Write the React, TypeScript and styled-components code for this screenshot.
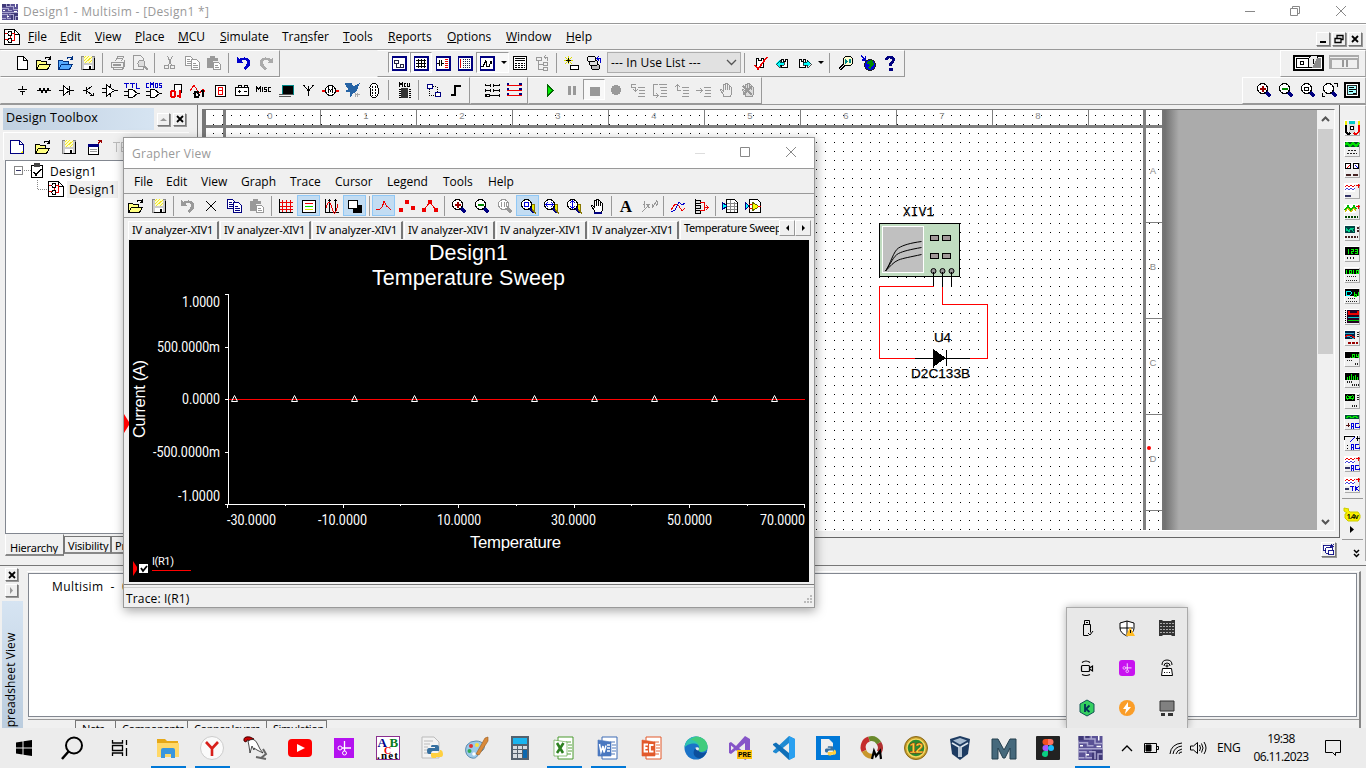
import React from 'react';
import styled, { createGlobalStyle, css } from 'styled-components';

const UI = `'Open Sans', 'Noto Sans', sans-serif`;
const TAB = `'Noto Sans', sans-serif`;

const Global = createGlobalStyle`
  * { box-sizing: border-box; }
  html, body { margin: 0; padding: 0; overflow: hidden; }
  body { font: 12px/16px ${UI}; color: #000; background: #f0f0f0; }
`;

/* ---------- icon drawings, 16 x 16 units ---------- */

const L = ({ d, c = '#000', w = 1, f = 'none' }: { d: string; c?: string; w?: number; f?: string }) => (
  <path d={d} stroke={c} strokeWidth={w} fill={f} />
);
const F = ({ d, c = '#000' }: { d: string; c?: string }) => <path d={d} fill={c} />;

const lens = (inner: React.ReactNode, rim = '#000', grip = '#000080') => (
  <>
    <circle cx="6.5" cy="6.5" r="5" fill="#fff" stroke={rim} />
    <L d="M10.5 10.5l4 4" c={grip} w={3} />
    {inner}
  </>
);
const hand = (c: string, f: string) => (
  <L d="M5.5 14.5v-2l-3-4c0-2 2-1 3 1v-6c0-2 2-2 2 0v-1c0-2 2-2 2 0v1c0-1 2-1 2 0v2c0-1 2-1 2 0v6l-1 3z M7.500 4v4 M9.500 4v4 M11.500 5v3" c={c} f={f} />
);
const openFolder = (f: string, c: string) => (
  <>
    <L d="M.5 14.500v-9h4l1 1h5v3M.5 14.500l3-5h11l-3 5z" c={c} f={f} />
    <L d="M9 3.500q2-3 5 0M14.500 1v3.500h-3" c={c} />
  </>
);
const disk = (
  <>
    <rect x="1.500" y="1.500" width="13" height="13" fill="#ccc" stroke="#888" />
    <rect x="4" y="1" width="8" height="7" fill="#ffffc8" />
    <L d="M4 3l2-2M4 6l5-5M5 8l7-6M9 8l3-3" c="#f0e428" />
    <rect x="4" y="10" width="8" height="5" fill="#fff" />
    <F d="M9 11h2v4H9zM14 3h1v12H3v-1h11z" />
  </>
);
const page = <L d="M3.500 1.500h6l4 4v9h-10zM9.500 1.500v4h4" f="#fff" />;
const undo = (c: string) => <path d="M1 2v6h6L5 6q5-3 6 1 0 3-4 6l2 2q7-5 5-9Q11 0 3 4z" fill={c} />;
const copy = (c: string) => (
  <>
    <L d="M1.500 1.500h5l2 2v7h-7zM3 4.500h3M3 6.500h4M3 8.500h4" c={c} f="#fff" />
    <L d="M7.500 4.500h5l3 3v7h-8zM9 8.500h3M9 10.500h5M9 12.500h5" c={c} f="#fff" />
  </>
);
const paste = (
  <>
    <F d="M1 3h3V1h5v2h3v3H7v7H1z" c="#999" />
    <L d="M7.500 7.500h5l2 2v5h-7zM9 10.500h3M9 12.500h4" c="#999" f="#fff" />
  </>
);
const windowFrame = (inner: React.ReactNode) => (
  <>
    <rect x="1.500" y="1.500" width="13" height="13" fill="#fff" stroke="#000080" strokeWidth="1" />
    <F d="M1 1h14v2H1zM14 1h1.500v14.500H1V14h13z" c="#000080" />
    {inner}
  </>
);
const designDoc = (
  <>
    <L d="M.5.500h10l5 5v10H.5z" f="#fff" />
    <L d="M10.500.500v5h5" />
    <L d="M1 4.500h3M1 10.500h3M8 4.500h2.500v7H8M6.500 6v4" c="#e00" />
    <circle cx="6" cy="4.500" r="2" fill="#fff" stroke="#000" />
    <circle cx="6" cy="11.500" r="2" fill="#fff" stroke="#000" />
  </>
);
const stepLines = <L d="M8 5.500h7M9 8.500h6M9 11.500h6M8 14.500h7" c="#999" />;
const gate = <L d="M0 9.500h4M0 13.500h4M4.500 7.500h4l5 4-5 4h-4zM13 11.500h3" f="#fff" />;

const ICONS: Record<string, React.ReactNode> = {
  app: (
    <>
      <rect width="16" height="16" fill="#5a5296" />
      <F d="M0 0h7v3H0zM9 9h7v7H9z" c="#403a78" />
      <L d="M0 4.500h6v2h4M4 0v2h7v3h5M0 8.500h16M0 10.500h5v4h4M7 10.500h4v5M13 16v-4h3M0 14.500h4M8.500 0v2" c="#a9a5cf" />
      <L d="M13.500 0v3M1 6.500h2M5 12.500h2M12 7h3" c="#fff" />
    </>
  ),
  design: designDoc,
  new: page,
  open: openFolder('#ffff80', '#000'),
  openSample: openFolder('#55aaff', '#003080'),
  save: disk,
  print: (
    <>
      <L d="M5.500 6.500l2-5h6l-2 5M1.500 7.500h12v5h-12zM3.500 12.500v2h9l2-4M14.500 5v6M7 3.500h5" c="#999" f="#f0f0f0" />
      <F d="M3 9h8v2H3z" c="#999" />
    </>
  ),
  preview: (
    <>
      <L d="M1.500.500h7l3 3v11h-10z" c="#999" />
      <circle cx="9.500" cy="8.500" r="3.500" fill="#ddd" stroke="#999" />
      <L d="M12 11l4 4" c="#999" w={2} />
    </>
  ),
  cut: (
    <>
      <L d="M5.500 1l4 9M10.500 1l-4 9" c="#999" />
      <circle cx="4.500" cy="12" r="2" fill="none" stroke="#999" />
      <circle cx="10.500" cy="12" r="2" fill="none" stroke="#999" />
    </>
  ),
  copyGray: copy('#999'),
  copy: copy('#000080'),
  paste,
  undo: undo('#00c'),
  undoGray: undo('#999'),
  redoGray: <g transform="matrix(-1 0 0 1 16 0)">{undo('#aaa')}</g>,
  viewTool: windowFrame(<L d="M3.500 5.500h4v3h-4zM5.500 8v4h4M9.500 9.500h3v3h-3z" c="#224" />),
  viewGrid: windowFrame(<L d="M5.500 4v9M8.500 4v9M11.500 4v9M3 5.500h10M3 8.500h10M3 11.500h10" />),
  viewPart: windowFrame(
    <>
      <L d="M2 8.500h2M4.500 5v6M6.500 5v6M7 8.500h2" />
      <L d="M10 4.500h3M10 6.500h3M10 8.500h3M10 10.500h3M10 12.500h3" c="#e00" />
    </>,
  ),
  viewSheet: windowFrame(
    <>
      <L d="M3.500 4v9" c="#e00" />
      <path d="M6.500 4v9M8.500 4v9M10.500 4v9M12.500 4v9" stroke="#224" strokeDasharray="1 1" />
    </>,
  ),
  viewGraph: windowFrame(<L d="M2 11.500h2l3-6 1 6h2l2-5 1 2" />),
  calc: (
    <>
      <rect x="1.500" y="1.500" width="13" height="13" fill="#fff" stroke="#000" />
      <L d="M3 3.500h10M3 5.500h10" />
      <path d="M3 8.500h10M3 10.500h10M3 12.500h10" stroke="#000" strokeDasharray="2 1" />
    </>
  ),
  tree: <L d="M2 2.500h5v3H2zM4.500 6v8h5M5 9.500h4M9.500 7.500h4v3h-4zM9.500 12.500h4v3h-4zM13.500 6v-4h-3M12 0l-2 2 2 2" c="#999" />,
  newPart: (
    <>
      <L d="M4.500 1v8M0 5.500h9M1 2l7 7M8 2L1 9" c="#dd0" />
      <rect x="6.500" y="10.500" width="8" height="4" fill="#fff" stroke="#000" />
      <L d="M4.500 3v5M2 5.500h5" />
    </>
  ),
  database: (
    <>
      <rect x="5.500" y="9.500" width="8" height="5" rx="2" fill="#bbb" stroke="#000" />
      <rect x="3.500" y="5.500" width="8" height="5" rx="2" fill="#ddd" stroke="#000" />
      <rect x="1.500" y="1.500" width="8" height="5" rx="2" fill="#eee" stroke="#000" />
      <L d="M14.500 8V3.500h-3M13 1l-2 2.500 2 2" c="#00c" />
    </>
  ),
  erc: (
    <>
      <L d="M3.500 12V3h2v2h3V3h2v9z" f="#fff" />
      <L d="M2 10l3 4 9-12" c="#e00" w={1.600} />
    </>
  ),
  annotBack: (
    <>
      <L d="M6.500 12.500v-8h2v2h2v-2h2v8z" f="#fff" />
      <path d="M1 8.500l4-4v2.500h4v3H5v2.500z" fill="#0ff" stroke="#000" strokeWidth=".7" />
    </>
  ),
  annotFwd: (
    <>
      <L d="M2.500 12.500v-8h2v2h2v-2h2v8z" f="#fff" />
      <path d="M14 8.500l-4-4v2.500H6v3h4v2.500z" fill="#0ff" stroke="#000" strokeWidth=".7" />
    </>
  ),
  find: (
    <>
      <circle cx="10" cy="6" r="5" fill="#ffffd0" stroke="#000" />
      <L d="M6.500 9.500l-5 5" w={3} />
      <L d="M6.500 9.500l-5 5" c="#eee" />
      <F d="M7 4l3 2-3 3zM11 4h2v4h-2z" c="#088" />
    </>
  ),
  web: (
    <>
      <circle cx="10" cy="10" r="5.500" fill="#0000e0" stroke="#222" />
      <F d="M8 6l4-1 2 4-3 4-1 2-2-3 2-2-3-1z" c="#080" />
      <L d="M1 1l4 3M5.500.500v4.500H2" c="#00c" w={1.600} />
    </>
  ),
  help: (
    <path d="M3 5q0-4 5-4t5 4q0 2-3 4v2H7V8q3-2 3-3T8 3.500 6 5zM6.500 12.500h4v3h-4z" fill="#000080" />
  ),

  source: <L d="M8.500 4v3M4 7.500h9M6 9.500h5M8.500 10v3" />,
  resistor: <L d="M1 8.500h2l1-2 2 4 2-4 2 4 2-4 1 2h2" />,
  diode: <L d="M1 8.500h4M12 8.500h4M5.500 4v9l6-4.500zM11.500 4v9" f="#fff" />,
  transistor: <L d="M3 8.500h3M6.500 5v7M7 8l5-4M7 9l5 4M10 13.500h3v-3" />,
  opamp: <L d="M0 6.500h4M0 10.500h4M4.500 3v11l8-5.500zM12 8.500h4M8.500 2v3M8.500 12v3" f="#fff" />,
  ttl: (
    <>
      {gate}
      <L d="M0 1.500h5M2.500 1v5M6 1.500h5M8.500 1v5M12.500 1v5h3" c="#00c" />
    </>
  ),
  cmos: (
    <>
      {gate}
      <L d="M3 1.500H.5v4H3M4.500 6V1l1.500 2 1.500-2v5M9 1.500h2v4H9zM15.500 1.500H13v2h2.500v2H13" c="#00c" />
    </>
  ),
  misdigital: (
    <>
      <L d="M6.500 8V2.500h7v8M6 2.500h2" f="#fff" />
      <rect x="3" y="9" width="4" height="6" rx="1.500" fill="none" stroke="#e00" strokeWidth="2" />
      <L d="M12 8v8" c="#e00" w={2.400} />
      <L d="M9 14h1.500" c="#e00" w={2} />
    </>
  ),
  mixed: (
    <>
      <L d="M0 9l4-6 3 5 3 3 3-4 2 3" c="#e00" />
      <rect x="4.500" y="10" width="4" height="5" rx="1.500" fill="none" stroke="#000" strokeWidth="2" />
      <L d="M13 8v7M11 9.500l2-1" w={2} />
    </>
  ),
  indicator: (
    <>
      <rect x="3.500" y="3.500" width="10" height="11" fill="#fff" stroke="#000" />
      <L d="M6.500 5.500h4v3h-4zM6.500 8.500h4v4h-4z" c="#e00" />
    </>
  ),
  power: <L d="M1.500 5.500h13v8h-13zM4 5V3h3v2M10 5V3h3v2M4 9.500h3M9.500 9.500h3M5.500 8v3" f="#fff" />,
  misc: <L d="M.5 10V5l2 2 2-2v5M6.500 5v5M10.500 5.500H8.500v2h2v2h-2.500M14.500 5.500h-2v4h2" />,
  periph: (
    <>
      <rect x="4" y="3" width="11" height="9" fill="#000" stroke="#088" />
      <L d="M1 12.500h14M1 14.500h12" c="#555" />
    </>
  ),
  rf: <L d="M8.500 14V9l-5-6M8.500 9l5-6M8.500 4v6" />,
  motor: (
    <>
      <L d="M0 8.500h3M14 8.500h3" c="#e00" w={2} />
      <circle cx="8.500" cy="8.500" r="5" fill="#fff" stroke="#000" />
      <L d="M6.500 11V6l2 3 2-3v5" />
    </>
  ),
  ni: (
    <>
      <path d="M1 1h6l2 4 6-3-3 7-3 2-3 4 1-5-5-1 3-1z" fill="#2563a5" stroke="#2563a5" />
      <L d="M11 11v4M13 11v4M12 12.500h4" c="#aaa" />
    </>
  ),
  socket: (
    <>
      <rect x="4" y="1.500" width="8" height="14" rx="4" fill="#fff" stroke="#000" />
      <path d="M6.500 4v10M9.500 4v10" stroke="#000" strokeDasharray="2 1" />
    </>
  ),
  mcu: (
    <>
      <L d="M3.500 4.500V1l1.500 2 1.500-2v3.500M10 1.500H8v3h2M11.500 1v3.500h2V1" />
      <F d="M5 6h7v10H5z" c="#333" />
      <path d="M3.500 7v9M13.500 7v9" stroke="#000" strokeWidth="2" strokeDasharray="1 1" />
    </>
  ),
  hier: (
    <>
      <rect x="1.500" y="2.500" width="5" height="4" fill="#fff" stroke="#000080" />
      <rect x="9.500" y="10.500" width="5" height="4" fill="#fff" stroke="#000080" />
      <path d="M3.500 7v6.500h6M7 4.500h4v6" stroke="#000" fill="none" strokeDasharray="1 1" />
    </>
  ),
  bus: <L d="M3 13h4V4h6" w={2} />,
  ladder1: (
    <>
      <L d="M1.500 2v2M15.500 2v2M1.500 7v3M15.500 7v3M1.500 12v3M15.500 12v3M1 3.500h5M10 3.500h6M1 8.500h5M10 8.500h6M1 13.500h15M6.500 2v3M9.500 2v3M6.500 7v3M9.500 7v3" />
      <circle cx="4" cy="13.500" r="1.500" fill="#fff" stroke="#000" />
    </>
  ),
  ladder2: (
    <>
      <L d="M1 3.500h15M1 8.500h15M1 13.500h15" c="#e00" />
      <L d="M1 2h2M13 2h3M1 7h2M13 7h3M1 12h2M13 12h3" c="#000080" w={1.500} />
    </>
  ),
  run: <path d="M5 2.500v12l6-6z" fill="#0e0" stroke="#060" />,
  pause: <F d="M4 4h3v9H4zM9 4h3v9H9z" c="#999" />,
  stop: <F d="M4 5h10v9H4z" c="#999" />,
  record: <circle cx="8" cy="8" r="5" fill="#999" />,
  step1: (
    <>
      {stepLines}
      <L d="M6 2.500H1.500v3h4v3M3 7l2.500 2L8 7" c="#999" />
    </>
  ),
  step2: (
    <>
      {stepLines}
      <L d="M6 2.500H1.500v11h4M4 11l2 2.500L4 16M7 2.500h8" c="#999" />
    </>
  ),
  step3: (
    <>
      {stepLines}
      <L d="M7 8.500H3.500V3M1 5l2.500-2L6 5" c="#999" />
    </>
  ),
  step4: (
    <>
      {stepLines}
      <L d="M0 8.500h6M4 6l2.500 2.500L4 11" c="#999" />
    </>
  ),
  handGray: hand('#999', '#eee'),
  handX: (
    <>
      {hand('#999', '#ddd')}
      <L d="M3 4l9 9M12 4l-9 9" c="#999" w={1.500} />
    </>
  ),
  hand: (
    <>
      {hand('#000', '#fff')}
      <F d="M5 14h8v2H5z" c="#000080" />
    </>
  ),
  zoomIn: lens(<L d="M3.500 6.500h6M6.500 3.500v6" c="#900" w={2} />),
  zoomOut: lens(<L d="M3.500 6.500h6" c="#080" w={2} />),
  zoomArea: lens(<L d="M4.500 5h4v3.500h-4z" />),
  zoomFit: (
    <>
      {lens(null)}
      <L d="M12 1.500h3.500V5M0 11v3.500h3" />
    </>
  ),
  zoomSheet: (
    <>
      <rect x="1" y="1" width="14" height="14" fill="#fff" stroke="#000" strokeWidth="1.500" />
      <rect x="3.500" y="3.500" width="9" height="9" fill="#a8ffff" stroke="#222" />
      <L d="M5 5.500h5M5 7.500h7M5 9.500h4M9 11.500h3" />
    </>
  ),
  zoomOneGray: lens(<L d="M4.500 4v5M7.500 4v5M9.500 4v5" c="#999" />, '#999', '#999'),
  zoomBox: (
    <>
      {lens(<L d="M4.500 4.500h4v4h-4z" c="#00d" w={1.400} />)}
      <L d="M12 6.500h2v4l1 4-3-3" c="#870" f="#ee0" />
    </>
  ),
  zoomHor: (
    <>
      {lens(<L d="M2.500 6.500h8M5 4L2.500 6.500 5 9M8 4l2.500 2.500L8 9" c="#00d" />)}
      <L d="M12 6.500h2v4l1 4-3-3" c="#870" f="#ee0" />
    </>
  ),
  zoomVer: (
    <>
      {lens(<L d="M6.500 2.500v8M4 5l2.500-2.500L9 5M4 8l2.500 2.500L9 8" c="#00d" />)}
      <L d="M12 6.500h2v4l1 4-3-3" c="#870" f="#ee0" />
    </>
  ),
  newNote: (
    <>
      <path d="M1.500 1.500h9l4 4v9h-13z" fill="#fff" stroke="#000080" />
      <L d="M10.500 1.500v4h4" c="#000080" />
      <F d="M11 14l3-3v3z" c="#ee0" />
    </>
  ),
  winArrow: (
    <>
      <rect x="1.500" y="5.500" width="10" height="10" fill="#fff" stroke="#000" />
      <F d="M1 5h11v3H1z" c="#000080" />
      <L d="M3 10.500h7M3 12.500h7" c="#999" />
      <L d="M11 4.500l3-3M11 1.500h3.500V4" c="#900" />
    </>
  ),
  rename: <L d="M0 3.500h7M3.500 4v9M12 3.500H8v9h4M8 8.500h3" c="#bbb" />,
  cross: <L d="M3 3l10 10M13 3L3 13" w={1.300} />,
  gridRed: (
    <>
      <L d="M4.500 2v12M8.500 2v12M12.500 2v12M2 4.500h13M2 8.500h13M2 11.500h13" c="#e00" />
      <L d="M1.500 1v13.500H15" />
    </>
  ),
  legend: (
    <>
      <rect x="1.500" y="2.500" width="13" height="12" fill="#fff" stroke="#000" />
      <L d="M4 5.500h8" c="#e00" />
      <L d="M4 8.500h8" c="#0d0" />
      <L d="M4 11.500h8" c="#dd0" />
    </>
  ),
  cursors: (
    <>
      <L d="M1.500 1v13.500H15M5.500 1v14M11.500 1v14M4 2h3M10 2h3" />
      <L d="M2 10q3-12 6 0t6-4" c="#e00" />
    </>
  ),
  invert: (
    <>
      <rect x="1.500" y="2.500" width="9" height="8" fill="#fff" stroke="#000" />
      <F d="M6 7h9v8H6z" />
      <F d="M6 7h4v3H6z" c="#fff" />
    </>
  ),
  trace: <L d="M0 11.500h3l3-2 2-6 3 5 4 3" c="#e00" />,
  dots: <F d="M0 10h4v4H0zM6 2h4v4H6zM12 8h4v4h-4z" c="#e00" />,
  traceDots: (
    <>
      <L d="M2 12l6-8 6 8" c="#e00" />
      <F d="M0 10h4v4H0zM6 2h4v4H6zM12 10h4v4h-4z" c="#e00" />
    </>
  ),
  letterA: (
    <text x="8" y="14" fontFamily="Liberation Serif, serif" fontWeight="700" fontSize="17" textAnchor="middle">
      A
    </text>
  ),
  xy: <L d="M1 14l4-4M5.500 6l3 4M8.500 6l-3 4M11 6l2 3M15 4l-4 6M4 3.500q-2 3 0 6M15.500 2q2 3 0 6" c="#999" />,
  overlay: (
    <>
      <L d="M1 12l4-6 4 2 3 5 3-3" c="#e00" />
      <L d="M1 14l4-2 4-8 3 3 3-2" c="#00c" />
    </>
  ),
  addTrace: (
    <>
      <L d="M2.500 1v14M2 2.500h5v3H2M2 7.500h5v3H2M2 12.500h5v3H2" f="#ddd" />
      <L d="M7 4.500h4v8H7M11 9.500h4M13 7l2.500 2.500L13 12" c="#e00" />
    </>
  ),
  toExcel: (
    <>
      <L d="M4.500 1.500h8l3 3v10h-11z" f="#fff" />
      <L d="M5 5.500h10M5 8.500h10M5 11.500h10M8.500 2v12M12.500 4v10" c="#888" />
      <path d="M0 4l5 4-5 4z" fill="#0ff" stroke="#000080" />
    </>
  ),
  toLab: (
    <>
      <L d="M4.500 1.500h8l3 3v10h-11z" f="#fff" />
      <path d="M7 4l7 4.500-7 4.500z" fill="#ff0" stroke="#660" />
      <L d="M4 6.500h3M4 10.500h3M13 8.500h3" c="#e00" />
      <path d="M0 4l4 4-4 4z" fill="#0ff" stroke="#000080" />
    </>
  ),
  windows: (
    <>
      <L d="M1.500 2.500h8v6h-8z" c="#000080" f="#fff" />
      <L d="M4.500 5.500h8v6h-8z" c="#000080" f="#fff" />
      <L d="M7.500 8.500h6v5h-6zM10 4l4-3M11 1v3h3" c="#000080" f="#fff" />
    </>
  ),
  clip: (
    <>
      <rect x=".5" y="2.500" width="11" height="12" fill="#fff" stroke="#000" strokeWidth="1.500" />
      <F d="M3 0h6v4H3z" c="#444" />
      <L d="M3 9l2 3 5-6" w={1.600} />
    </>
  ),
};

const Svg16 = styled.svg`
  display: block;
  flex: none;
  overflow: visible;
`;
const Icon = ({ name, size = 16 }: { name: string; size?: number }) => (
  <Svg16 width={size} height={size} viewBox="0 0 16 16" shapeRendering="crispEdges">
    {ICONS[name]}
  </Svg16>
);

/* ---------- main window chrome ---------- */

const Desktop = styled.div`
  position: relative;
  width: 1366px;
  height: 768px;
  overflow: hidden;
  display: flex;
  flex-direction: column;
  background: #f0f0f0;
`;
const TitleBar = styled.div`
  height: 24px;
  flex: none;
  display: flex;
  align-items: center;
  gap: 5px;
  padding-left: 2px;
  background: #fff;
  border-bottom: 1px solid #999;
  color: #999;
`;
const TitleText = styled.div`
  flex: 1;
  padding-top: 1px;
  letter-spacing: 0.320px;
`;
const Caption = styled.svg`
  width: 46px;
  height: 20px;
  flex: none;
`;
const MenuBar = styled.div`
  height: 26px;
  flex: none;
  display: flex;
  align-items: center;
  padding: 0 4px 0 4px;
  border-top: 1px solid #fff;
  border-bottom: 1px solid #999;
`;
const MenuItem = styled.div<{ $w: number }>`
  width: ${(p) => p.$w}px;
  flex: none;
  white-space: nowrap;
`;
const MdiButtons = styled.div`
  margin-left: auto;
  display: flex;
  gap: 2px;
  padding-top: 4px;
`;
const raised = css`
  background: #f0f0f0;
  border: 1px solid #fff;
  border-right-color: #777;
  border-bottom-color: #777;
  box-shadow: 1px 1px 0 #999;
`;
const SmallButton = styled.div<{ $s: number }>`
  ${raised}
  width: ${(p) => p.$s}px;
  height: ${(p) => p.$s}px;
  flex: none;
  display: flex;
  align-items: center;
  justify-content: center;
`;
const BarRow = styled.div`
  height: 27px;
  flex: none;
  display: flex;
`;
const Bar = styled.div<{ $w: number; $pad?: number; $end?: boolean }>`
  width: ${(p) => p.$w}px;
  height: 27px;
  flex: none;
  display: flex;
  align-items: center;
  padding-bottom: 2px;
  padding-left: ${(p) => p.$pad ?? 11}px;
  margin-left: ${(p) => (p.$end ? 'auto' : '0')};
  border-top: 1px solid #fff;
  border-left: 1px solid ${(p) => (p.$end ? '#fff' : 'transparent')};
  border-right: 1px solid ${(p) => (p.$end ? '#aaa' : '#999')};
  border-bottom: 1px solid #999;
`;
const Cell = styled.div<{ $w?: number; $on?: boolean }>`
  width: ${(p) => p.$w ?? 22}px;
  height: 21px;
  flex: none;
  display: flex;
  align-items: center;
  justify-content: center;
  gap: 6px;
  ${(p) =>
    p.$on &&
    css`
      background: #f8f8f8;
      border: 1px solid #999;
      border-right-color: #fff;
      border-bottom-color: #fff;
    `}
`;
const Sep = styled.div<{ $w?: number }>`
  width: ${(p) => p.$w ?? 8}px;
  height: 20px;
  flex: none;
  &::before {
    content: '';
    display: block;
    width: 1px;
    height: 100%;
    margin-left: 3px;
    background: #999;
  }
`;
const Arrow = styled.div`
  border: 3px solid transparent;
  border-top-color: #000;
  border-bottom: 0;
`;
const Select = styled.div`
  width: 134px;
  height: 21px;
  margin: 0 0 0 1px;
  display: flex;
  align-items: center;
  justify-content: space-between;
  padding: 0 3px;
  background: #e1e1e1;
  border: 1px solid #adadad;
  letter-spacing: 0.150px;
`;
const Gap = styled.div<{ $w: number }>`
  width: ${(p) => p.$w}px;
  flex: none;
`;
const Icons = ({ names }: { names: string[] }) => (
  <>
    {names.map((n) => (
      <Cell key={n}>
        <Icon name={n} />
      </Cell>
    ))}
  </>
);

/* ---------- work area ---------- */

const Work = styled.div`
  height: 457px;
  flex: none;
  display: flex;
  border-top: 1px solid #999;
`;
const Toolbox = styled.div`
  width: 197px;
  flex: none;
  display: flex;
  flex-direction: column;
  padding: 3px 8px 0 3px;
`;
const ToolboxHead = styled.div`
  height: 22px;
  flex: none;
  display: flex;
  align-items: center;
  gap: 3px;
`;
const ToolboxTitle = styled.div`
  width: 151px;
  height: 22px;
  padding: 2px 3px;
  font-size: 12.500px;
  letter-spacing: 0.170px;
  background: linear-gradient(90deg, #c0d0e0, #d6e4f2);
`;
const ToolboxBar = styled.div`
  height: 28px;
  margin-top: 2px;
  flex: none;
  display: flex;
  align-items: center;
  gap: 10px;
  padding-left: 5px;
  border-top: 1px solid #fff;
  border-left: 1px solid #fff;
`;
const Tree = styled.div`
  height: 374px;
  flex: none;
  margin-left: 2px;
  padding-top: 1px;
  background: #fff;
  border: 1px solid #828790;
`;
const TreeRow = styled.div<{ $indent: number }>`
  height: 18px;
  display: flex;
  align-items: center;
  padding-left: ${(p) => p.$indent}px;
  line-height: 17px;
`;
const TreeLabel = styled.div<{ $sel?: boolean }>`
  margin-left: ${(p) => (p.$sel ? 3 : 1)}px;
  padding: 0 2px;
  letter-spacing: 0.300px;
  background: ${(p) => (p.$sel ? '#f0f0f0' : 'none')};
`;
const BottomTabs = styled.div`
  display: flex;
  align-items: flex-start;
  margin-left: 2px;
  font: 11px/15px ${TAB};
  letter-spacing: -0.200px;
  white-space: nowrap;
`;
const BottomTab = styled.div<{ $w: number; $on?: boolean }>`
  width: ${(p) => p.$w}px;
  height: ${(p) => (p.$on ? 22 : 18)}px;
  margin-top: ${(p) => (p.$on ? 0 : 2)}px;
  padding: ${(p) => (p.$on ? '5px 0 0 4px' : '1px 0 0 3px')};
  overflow: hidden;
  border: 1px solid #777;
  border-top-color: ${(p) => (p.$on ? 'transparent' : '#777')};
  border-left-color: ${(p) => (p.$on ? '#fff' : '#777')};
  border-bottom: 2px solid #888;
`;
const CanvasColumn = styled.div`
  width: 1143px;
  flex: none;
`;
const CanvasFrame = styled.div`
  height: 433px;
  padding: 4px 5px 0 4px;
  border-left: 1px solid #777;
  border-right: 1px solid #666;
  border-bottom: 1px solid #666;
`;
const CanvasInner = styled.div`
  display: flex;
  width: 1133px;
  height: 422px;
  border: 1px solid #777;
  border-left-width: 4px;
  border-right: 1px solid #fff;
  border-bottom: 1px solid #fff;
`;
const Backdrop = styled.div`
  width: 155px;
  background: linear-gradient(90deg, #757575 0, #727272 3px, #ababab 17px);
`;
const ScrollBar = styled.div`
  width: 17px;
  display: flex;
  flex-direction: column;
  align-items: center;
  background: #f0f0f0;
`;
const ScrollThumb = styled.div`
  width: 15px;
  height: 225px;
  margin-bottom: auto;
  background: #cdcdcd;
`;
const Dock = styled.div`
  height: 23px;
  display: flex;
  align-items: center;
  justify-content: flex-end;
  padding-right: 4px;
`;
const Strip = styled.div`
  width: 26px;
  display: flex;
  flex-direction: column;
  align-items: center;
  padding: 14px 1px 0 0;
  border-right: 1px solid #aaa;
  border-top: 1px solid #fff;
`;
const Instrument = styled.svg`
  width: 16px;
  height: 16px;
  margin-bottom: 5px;
  flex: none;
  overflow: visible;
`;
const StripLine = styled.div`
  width: 21px;
  height: 1px;
  flex: none;
  background: #999;
`;

const agMark = <L d="M7.500 14.500V9.500h2v5M8 12.500h2M15 9.500h-3.500v4H15v-2" c="#00d" />;
const scopeWave = (
  <>
    <rect x="1" y="1" width="10" height="8" fill="#fff" />
    <L d="M1 4l2-2 2 2 2-2 2 2 2-2" c="#e00" />
    <L d="M1 7l2-2 2 2 2-2 2 2 2-2" c="#44d" />
    <L d="M12 2.500h4M14 .500v4" c="#e00" />
  </>
);

const instrumentFaces: React.ReactNode[] = [
  <>
    <F d="M5 1h6v12H5z" c="#ddd" />
    <F d="M5 1h6v3H5z" c="#0cc" />
    <circle cx="8" cy="8" r="2" fill="#fff" stroke="#000" />
    <L d="M1.500 1v4M14.500 1v4" c="#ee0" w={2} />
    <L d="M1.500 5v7q2 3 5 1" w={2} />
    <L d="M14.500 5v7q-2 3-5 1" c="#e00" w={2} />
  </>,
  <><F d="M1 1h14v5H1z" c="#052" /><L d="M1 4l2-2 3 3 3-3 3 3 3-3" c="#0d0" w={1.500} /><path d="M4 9.500h8M3 12.500h10" stroke="#222" strokeDasharray="2 1" /></>,
  <><L d="M1.500 1.500h5v5h-5zM9.500 1.500h5v5h-5z" f="#fff" /><L d="M3 6l3-3" c="#e00" /><L d="M11 3l3 3" c="#00d" /><L d="M2 12.500h5M9 12.500h5" w={2} c="#422" /></>,
  <>{scopeWave}<L d="M1 12.500h6" c="#336" w={2} /></>,
  <><rect x="1" y="1" width="11" height="8" fill="#fff" /><L d="M1 6l3-4 3 4 3-4 2 3" c="#0b0" w={1.500} /><L d="M1 8l3-4 3 4 3-4 2 3" c="#cb0" /><L d="M12 2.500h4M14.500 1v4" c="#e00" /><path d="M1 12.500h13" stroke="#040" strokeWidth="2" strokeDasharray="2 1" /></>,
  <><F d="M1 1h10v7H1z" c="#044" /><L d="M2 3l3 4 2-4 3 4M2 6l8-3" c="#0c8" /><path d="M14 2v6M1 12h13" stroke="#422" strokeWidth="2" strokeDasharray="2 1" /></>,
  <><F d="M1 1h14v8H1z" /><L d="M4.500 3v5M7 3.500h2v2H7v2h2M11 3.500h2v4h-2M11 5.500h2" c="#0e0" /><path d="M3 12h9" stroke="#222" strokeDasharray="1 2" strokeWidth="2" /></>,
  <><F d="M1 2h14v5H1z" /><L d="M2.500 3v4M5 3.500h2v3H5zM9.500 3v4M12 3.500h2v3h-2z" c="#0e0" /><path d="M3 9.500h10M2 13h12" stroke="#222" strokeDasharray="1 1" /></>,
  <><F d="M1 1h14v7H1z" /><path d="M2 3h4l2 2-2 2H2z" stroke="#0ff" fill="none" /><L d="M10.500 4v4h2V6h-2M14.500 4v4" c="#0e0" /><path d="M4 10.500h8M2 13.500h12" stroke="#222" strokeDasharray="1 1" /></>,
  <><F d="M3 1h12v13H3z" c="#202" /><L d="M5 2v3h9V2" c="#e00" w={2} /><L d="M4 8h11" c="#0cc" /><L d="M4 11.500h11" c="#0c0" /><path d="M1 1v14" stroke="#000" strokeDasharray="1 1" /></>,
  <><F d="M1 1h10v8H1z" c="#024" /><L d="M1 3h9M1 6q5 0 9 3" c="#3ac" /><L d="M1 7q4-4 10 1" c="#e00" /><path d="M14 2v6" stroke="#222" strokeDasharray="1 1" strokeWidth="2" /><path d="M4 13h10" stroke="#900" strokeWidth="2" strokeDasharray="3 1" /></>,
  <><F d="M1 1h14v6H1z" /><L d="M6 6h1M8.500 3.500h2v3h-2zM12.500 3v2h2V3v4" c="#0e0" /><path d="M3 9.500h6M11 13h4" stroke="#222" strokeDasharray="1 1" strokeWidth="1.500" /></>,
  <><F d="M1 1h14v7H1z" /><L d="M3.500 5v3M5.500 4v4M7.500 2v6M9.500 4v4M11.500 3v5M13.500 5v3" c="#0e0" /><path d="M3 10h5M8 13h7" stroke="#222" strokeDasharray="1 1" strokeWidth="1.500" /></>,
  <><F d="M1 1h10v7H1z" /><L d="M3 2l6 5M2 5h8M3 7l6-5M2.500 3v3M9.500 3v3" c="#0e0" /><path d="M14 2v5M8 13h6" stroke="#222" strokeDasharray="1 1" strokeWidth="1.500" /></>,
  <><F d="M1 1h14v4H1z" c="#053" /><L d="M2 4l3-2 3 2 3-2 3 2" c="#0e0" /><L d="M2 11h4M4 9v4" c="#511" />{agMark}</>,
  <><L d="M.5 5V1.500H11" /><L d="M6 7l5-5" c="#00d" /><L d="M13.500 1v5M12 3.500h4" />{agMark}<L d="M3 10v1M3 13v1" /></>,
  <>{scopeWave}<L d="M1 12h5" c="#336" w={2} />{agMark}</>,
  <>{scopeWave}<L d="M1 12h4" c="#336" w={2} /><L d="M6 9.500h4M8 9v5M11.500 9v5M15 9l-3 2.500 3 2.500" c="#00d" /></>,
];

/* ---------- schematic sheet ---------- */

const SheetSvg = styled.svg`
  flex: none;
  display: block;
`;
const Sheet = () => (
  <SheetSvg width="956" height="420" viewBox="206 110 956 420" shapeRendering="crispEdges">
    <defs>
      <pattern id="grid" x="861" y="196" width="9" height="9" patternUnits="userSpaceOnUse">
        <rect width="1" height="1" fill="#000" />
      </pattern>
    </defs>
    <rect x="206" y="110" width="956" height="420" fill="#fff" />
    <rect x="206" y="110" width="956" height="420" fill="url(#grid)" />
    <path d="M223 110h3v420h-3zM1143 110h3v420h-3zM206 125h956v3H206z" fill="#808080" />
    {[320, 416, 512, 608, 704, 800, 896, 992, 1088].map((x) => (
      <rect key={x} x={x} y="110" width="1" height="15" fill="#808080" />
    ))}
    {[222, 318, 414, 510].map((y) => (
      <rect key={y} x="1146" y={y} width="16" height="1" fill="#808080" />
    ))}
    <g fontFamily="Liberation Sans, sans-serif" fontSize="9.500" fill="#888" textAnchor="middle">
      {[0, 1, 2, 3, 4, 5, 6, 7, 8].map((n) => (
        <text key={n} x={270 + n * 96} y="119">{n}</text>
      ))}
      {['A', 'B', 'C', 'D'].map((n, i) => (
        <text key={n} x="1153" y={174 + i * 96}>{n}</text>
      ))}
    </g>
    <rect x="879.500" y="223.500" width="80" height="53" fill="#c0dcc0" stroke="#000" />
    <rect x="882.500" y="226.500" width="41" height="46" fill="#c0c0c0" stroke="#fff" />
    <g fill="none" stroke="#000" shapeRendering="auto">
      <path d="M885.500 271c5-7 8-20 13-23s12-5 23-6.500M885.500 271c5-7 8-15 13-17.500s12-4 23-6M885.500 271c5-5 8-9 13-11s12-3 23-5.500" />
    </g>
    {[[930, 235], [942, 235], [930, 253], [942, 253]].map(([x, y]) => (
      <rect key={`${x}-${y}`} x={x + 0.500} y={y + 0.500} width="8" height="5" fill="#a09898" stroke="#000" />
    ))}
    {[933, 942, 951].map((x) => (
      <g key={x}>
        <circle cx={x + 0.500} cy="271" r="2.500" fill="#999" stroke="#000" shapeRendering="auto" />
        <rect x={x} y="272" width="1" height="15" />
      </g>
    ))}
    <path d="M933.500 286.500h-54v72h36M942.500 286.500v18h45v54h-18" fill="none" stroke="#f00" />
    <path d="M915 358.500h55M946.500 350v16" stroke="#000" />
    <path d="M933 349v18l13-9z" />
    <g fontFamily="Liberation Sans, sans-serif" fontSize="13.500" stroke="#000" strokeWidth=".25" shapeRendering="auto">
      <text x="934" y="341.500" textLength="17">U4</text>
      <text x="911" y="378" textLength="59">D2C133B</text>
      <text x="903" y="216" fontSize="12.500" fontFamily="Liberation Mono, monospace" textLength="31">XIV1</text>
    </g>
    <circle cx="1149" cy="448" r="2" fill="#f00" shapeRendering="auto" />
  </SheetSvg>
);

/* ---------- grapher window ---------- */

const Grapher = styled.div`
  position: absolute;
  left: 123px;
  top: 137px;
  width: 692px;
  height: 471px;
  display: flex;
  flex-direction: column;
  background: #f0f0f0;
  border: 1px solid #999;
  box-shadow: 1px 3px 10px rgba(0, 0, 0, 0.35);
`;
const GTitle = styled.div`
  height: 31px;
  flex: none;
  display: flex;
  align-items: center;
  justify-content: space-between;
  padding: 1px 4px 0 8px;
  background: #fff;
  border-bottom: 1px solid #999;
  color: #999;
  letter-spacing: 0.260px;
  white-space: nowrap;
`;
const GMenu = styled.div`
  height: 25px;
  flex: none;
  display: flex;
  align-items: center;
  padding: 1px 0 0 10px;
  border-bottom: 1px solid #999;
`;
const GTools = styled.div`
  height: 24px;
  flex: none;
  display: flex;
  align-items: center;
  border-bottom: 1px solid #999;
`;
const GCell = styled.div<{ $on?: boolean }>`
  width: 23px;
  height: 21px;
  flex: none;
  display: flex;
  align-items: center;
  justify-content: center;
  padding-left: 1px;
  background: ${(p) => (p.$on ? '#c2dcf2' : 'none')};
  box-shadow: ${(p) => (p.$on ? 'inset 0 0 0 1px #90c8f6' : 'none')};
`;
const GTabs = styled.div`
  height: 21px;
  flex: none;
  display: flex;
  align-items: flex-end;
  padding-left: 4px;
  font: 11px/14px ${TAB};
  white-space: nowrap;
`;
const GTab = styled.div`
  width: 91px;
  height: 18px;
  margin-right: 1px;
  flex: none;
  padding: 1px 0 0 3px;
  letter-spacing: -0.130px;
  border: 1px solid #fff;
  border-bottom: 0;
  border-right: 2px solid #777;
`;
const GTabActive = styled.div`
  width: 99px;
  height: 20px;
  flex: none;
  padding: 1px 0 0 3px;
  overflow: hidden;
  letter-spacing: -0.350px;
  border-top: 1px solid #fff;
  border-left: 1px solid #fff;
`;
const GArrow = styled.div<{ $left?: boolean }>`
  width: 16px;
  height: 16px;
  flex: none;
  margin: 0 0 3px;
  display: flex;
  align-items: center;
  justify-content: center;
  border: 1px solid #999;
  border-left-color: #fff;
  border-top-color: #fff;
  &::before {
    content: '';
    border: 3px solid transparent;
    ${(p) => (p.$left ? 'border-right-color: #000; border-left: 0;' : 'border-left-color: #000; border-right: 0;')}
  }
`;
const PlotFrame = styled.div`
  height: 346px;
  flex: none;
  display: flex;
  padding-top: 1px;
  border-bottom: 1px solid #777;
`;
const GStatus = styled.div`
  flex: 1;
  display: flex;
  align-items: center;
  justify-content: space-between;
  margin-top: 2px;
  padding: 3px 2px 0;
  border-top: 1px solid #ccc;
  letter-spacing: 0.150px;
`;

const yLabels: [string, number, number][] = [
  ['1.0000', 302, 38], ['500.0000m', 347, 63], ['0.0000', 399, 38], ['-500.0000m', 452, 67], ['-1.0000', 496, 42],
];
const xLabels: [string, number, number][] = [
  ['-30.0000', 227, 49], ['-10.0000', 318, 49], ['10.0000', 437, 44], ['30.0000', 551, 45], ['50.0000', 667, 45], ['70.0000', 760, 45],
];

const Plot = () => (
  <SheetSvg width="685" height="342" viewBox="124 240 685 342">
    <rect x="129" y="240" width="680" height="342" fill="#000" />
    <path d="M124 414l5 8v3l-5 8z" fill="#f00" />
    <g stroke="#fff" shapeRendering="crispEdges" fill="none">
      <path d="M225 294.500h3M225 347.500h3M225 399.500h3M225 452.500h3M225 504.500h580M228.500 294v211M227.500 505v3M343.500 505v3M458.500 505v3M574.500 505v3M689.500 505v3M804.500 505v3M285.500 505v1M400.500 505v1M516.500 505v1M631.500 505v1M747.500 505v1" />
      <path d="M229 399.500h576" stroke="#f00" />
      <path d="M152 570.500h39" stroke="#f00" />
    </g>
    {Array.from({ length: 10 }, (_, i) => 234.500 + i * 60).map((x) => (
      <path key={x} d={`M${x} 395.500l-3 6h6z`} fill="none" stroke="#fff" />
    ))}
    <g fill="#fff" fontFamily="Liberation Sans, sans-serif">
      <text x="429" y="260" fontSize="21.500" textLength="79">Design1</text>
      <text x="372" y="285" fontSize="21.500" textLength="193">Temperature Sweep</text>
      <text x="470" y="548" fontSize="16.800" textLength="91">Temperature</text>
      <text transform="translate(145 438) rotate(-90)" fontSize="16.500" textLength="78">Current (A)</text>
      <g fontSize="14" fontFamily="Roboto, sans-serif">
        {yLabels.map(([t, y, w]) => (
          <text key={t} x={220 - w} y={y + 5} textLength={w} lengthAdjust="spacingAndGlyphs">{t}</text>
        ))}
        {xLabels.map(([t, x, w]) => (
          <text key={t} x={x} y="525" textLength={w} lengthAdjust="spacingAndGlyphs">{t}</text>
        ))}
        <text x="152" y="565" fontSize="11" textLength="22">I(R1)</text>
      </g>
    </g>
    <path d="M133 561l4 6v3l-4 6z" fill="#f00" />
    <rect x="139" y="564" width="9" height="9" fill="#fff" />
    <path d="M141 568l2 3 4-5" fill="none" stroke="#000" strokeWidth="1.800" />
  </SheetSvg>
);

const ToolGroup = ({ names, on = [] }: { names: string[]; on?: string[] }) => (
  <>
    {names.map((n) => (
      <GCell key={n} $on={on.includes(n)}>
        <Icon name={n} />
      </GCell>
    ))}
  </>
);

/* ---------- spreadsheet panel ---------- */

const Spreadsheet = styled.div`
  height: 166px;
  flex: none;
  margin-top: 4px;
  display: flex;
  border-top: 1px solid #777;
`;
const SideRail = styled.div`
  width: 27px;
  flex: none;
  padding: 2px 0 0 2px;
  display: flex;
  flex-direction: column;
  gap: 3px;
`;
const RailButton = styled(SmallButton)`
  margin-left: 3px;
`;
const RailLabel = styled.div`
  width: 21px;
  height: 140px;
  flex: none;
  margin-top: 1px;
  padding: 7px 0 0 2px;
  writing-mode: vertical-rl;
  transform: rotate(180deg);
  white-space: nowrap;
  text-align: left;
  line-height: 18px;
  letter-spacing: 0.100px;
  background: linear-gradient(0deg, #d6e4f2, #b8cadc);
`;
const SheetColumn = styled.div`
  flex: none;
  width: 1334px;
  margin-top: 5px;
  border-top: 1px solid #fff;
  border-right: 2px solid #888;
`;
const Results = styled.div`
  width: 1329px;
  height: 144px;
  margin: 1px 0 0 1px;
  padding: 5px 0 0 23px;
  background: #fff;
  border: 1px solid #828790;
  white-space: pre;
  letter-spacing: 0.400px;
`;
const SheetTabs = styled.div`
  display: flex;
  margin: 2px 0 0 1px;
  font: 11px/15px ${TAB};
  letter-spacing: -0.450px;
  white-space: nowrap;
  border-top: 1px solid #999;
`;
const SheetTab = styled.div<{ $w: number; $on?: boolean }>`
  width: ${(p) => p.$w}px;
  height: 20px;
  padding: ${(p) => (p.$on ? '5px 0 0 9px' : '1px 0 0 6px')};
  border-right: 1px solid #777;
  box-shadow: ${(p) => (p.$on ? 'none' : 'inset 0 1px 0 #777')};
`;

/* ---------- taskbar ---------- */

const Taskbar = styled.div`
  position: absolute;
  left: 0;
  right: 0;
  bottom: 0;
  height: 40px;
  display: flex;
  align-items: center;
  background: #ececec;
`;
const Task = styled.div<{ $w?: number; $active?: boolean }>`
  width: ${(p) => p.$w ?? 44}px;
  height: 40px;
  flex: none;
  display: flex;
  align-items: center;
  justify-content: center;
  background: linear-gradient(${(p) => (p.$active ? '#0078d7, #0078d7' : 'transparent, transparent')}) center bottom / 35px 2px no-repeat;
`;
const TaskIcon = styled.svg`
  width: 24px;
  height: 24px;
  overflow: visible;
`;
const Lang = styled.div`
  width: 38px;
  padding-left: 7px;
  letter-spacing: -0.300px;
`;
const Clock = styled.div`
  width: 70px;
  margin-left: -2px;
  margin-right: 2px;
  text-align: center;
  line-height: 18px;
  letter-spacing: -0.600px;
`;
const Notice = styled.svg`
  margin-left: 6px;
`;
const TrayPopup = styled.div`
  position: absolute;
  left: 1066px;
  top: 607px;
  width: 122px;
  height: 121px;
  display: grid;
  grid-template-columns: repeat(3, 40px);
  grid-template-rows: repeat(3, 40px);
  place-items: center;
  background: #e8e8e8;
  border: 1px solid #aaa;
  border-bottom: 0;
  box-shadow: 0 0 8px rgba(0, 0, 0, 0.3);
`;

const office = (c: string, mark: React.ReactNode) => (
  <>
    <path d="M6 1h15v22H6z" fill="#fff" stroke={c} />
    <path d="M14 6h5M16 9h4M16 12h4M16 15h4M15 18h4" stroke={c} strokeWidth="1.500" opacity=".6" />
    <path d="M2 4l13 2v14L2 20z" fill="#fff" stroke={c} strokeWidth=".6" />
    {mark}
  </>
);
const python = (
  <>
    <path d="M12 9h5q2 0 2 2v4h-6q-2 0-2 3H9q-2 0-2-3t2-3h6v-1h-4q0-2 1-2z" fill="#3670a0" />
    <path d="M18 22h-5q-2 0-2-2v-3h6q3 0 3-3h1q2 1 2 4t-2 3h-5v1z" fill="#ffd040" />
  </>
);
const scissors = (
  <>
    <circle cx="8" cy="12" r="2" fill="none" stroke="#fff" />
    <circle cx="12.500" cy="17" r="2" fill="none" stroke="#fff" />
    <path d="M10 12h9M12.500 15V5" stroke="#fff" strokeWidth="1.300" />
  </>
);

const TASKS: Record<string, React.ReactNode> = {
  start: <path d="M4 6.500l6.500-1v6H4zM11.500 5.300L20 4v7.500h-8.500zM4 12.500h6.500v6L4 17.500zM11.500 12.500H20V20l-8.500-1.300z" />,
  search: <g fill="none" stroke="#000"><circle cx="14" cy="9.500" r="8" strokeWidth="2" /><path d="M8.500 15.500L2 23" strokeWidth="2.500" /></g>,
  view: <path d="M4.500 4v3h10V4M4.500 20v-3h10v3M4.500 9.500h10v5h-10zM18.500 4v5M18.500 12v8" fill="none" stroke="#000" strokeWidth="1.300" />,
  explorer: <><path d="M1 3h8l2 2h11v15H1z" fill="#e6a817" /><path d="M1 7h22v14H1z" fill="#ffd868" /><path d="M5 22v-8q0-2 2-2h10q2 0 2 2v8h-4v-4H9v4z" fill="#3a96dd" /></>,
  yandex: <><circle cx="12" cy="12" r="11.500" fill="#fafafa" stroke="#ccc" /><path d="M6 6l6 6.500L18 6M12 12v8" stroke="#d8201b" strokeWidth="2.600" fill="none" /></>,
  lamp: <><path d="M0 5q-1-5 6-4l4 2-3 2-4-1-1 2z" fill="#c00" stroke="#400" /><path d="M4 5q6-4 9 2l3 6 3 4-6-3-3-2v2l-2-4-2 7-1-7z" fill="#fff" stroke="#222" strokeWidth=".8" /><path d="M19 13l3 5-5 4M12 21l10 2" fill="none" stroke="#666" strokeWidth="2" /></>,
  youtube: <><rect y="3" width="24" height="18" rx="4" fill="#f00" /><path d="M9 8l8 4-8 4z" fill="#fff" /></>,
  snip: <><rect x="2" y="2" width="20" height="20" fill="#b412f0" />{scissors}</>,
  abc: <><rect x=".5" y=".5" width="23" height="23" fill="#fff" stroke="#8a3090" /><g fontFamily="Liberation Serif, serif" fontWeight="700"><text x="1.500" y="10.500" fontSize="13" fill="#00008b">A</text><text x="13.500" y="10.500" fontSize="13" fill="#087a20">B</text><text x="8" y="17.500" fontSize="10" fill="#e00">C</text><text x="1" y="22.500" fontSize="11" textLength="21">.net</text></g></>,
  pyfile: <><path d="M2 1h12l5 5v16H2z" fill="#f3f3f3" stroke="#bbb" /><path d="M4 5h9M4 8h6M4 11h4M4 14h4M4 17h5" stroke="#bbb" />{python}</>,
  paint: <><path d="M12 5c8 0 10 6 7 9s-5 0-5 3-2 6-6 5C2 21 0 14 3 9q3-4 9-4z" fill="#9cc9e8" stroke="#5a8ab0" /><circle cx="7" cy="10" r="2" fill="#d33" /><circle cx="13" cy="9" r="2" fill="#f8e040" /><circle cx="5.500" cy="15" r="2" fill="#3a5" /><circle cx="10" cy="18" r="1.800" fill="#fff" /><path d="M12 18L21 2l3-1v4L15 19z" fill="#d98a3a" stroke="#975b1e" strokeWidth=".6" /></>,
  calculator: <><rect x="3" y="0" width="18" height="24" fill="#54616e" /><rect x="5" y="2" width="14" height="6" fill="#1ab5f0" /><path d="M5 10h4v3H5zM10 10h4v3h-4zM5 14h4v3H5zM10 14h4v3h-4zM5 18h4v4H5zM10 18h4v4h-4zM15 10h4v3h-4z" fill="#d8dde2" /><path d="M15 14h4v8h-4z" fill="#0b68b0" /></>,
  excel: office('#4a9a2e', <path d="M5 7l6 10M11.500 7L5 17" stroke="#2e8020" strokeWidth="2.600" />),
  word: office('#3f6db5', <><path d="M2 4l13 2v14L2 20z" fill="#4a78c0" /><path d="M3.500 8l1.500 8 2-6 1 6.500 2-7M11 9h3M11 12h3M11 15h3" stroke="#fff" strokeWidth="1.500" fill="none" /></>),
  ppt: office('#e2592b', <><path d="M2 4l13 2v14L2 20z" fill="#e2592b" /><path d="M8 8.500H4.500v7H8M4.500 12H7.500M13.500 9H10v6.500h3.500" stroke="#fff" strokeWidth="1.800" fill="none" /></>),
  edge: <><circle cx="12" cy="12" r="11.500" fill="#1a73c8" /><path d="M.5 12C1 4 7 .5 12 .5c7 0 12 5 11.500 11 0 4-8 6-9 3 2-3 0-7-4-7-5 0-9 2-10 4.500z" fill="#2fc4b0" /><path d="M12 .5c7 0 12 5 11.500 11 0 4-8 6-9 3 3-5-1-9-8-11z" fill="#4fd25c" opacity=".6" /><path d="M14.500 14.500c1 3 6 3 8.500 1-1 3-4 6-7 7-6-1-8-5-5-10 0 0 4 0 3.500 2z" fill="#0c4f9c" /><path d="M14.500 14.500q-3 0-3-3 3-1 3.500 1z" fill="#ececec" /></>,
  vs: <><path d="M17 0l5 3v18l-5 3L8 14l-5 4-2-1V7l2-1 5 4z" fill="#8655c8" /><path d="M17 7v10l-6-5zM3 9.500v5L6 12z" fill="#ececec" /><rect x="9" y="14" width="15" height="9" fill="#ffc20e" /><text x="10" y="21" fontFamily="Roboto, sans-serif" fontWeight="700" fontSize="7" textLength="13">PRE</text></>,
  vscode: <><path d="M17 0l6 3v18l-6 3V7L4 17.500 1 16v-1z" fill="#1f8ad2" /><path d="M1 8l3-1.500L17 17v7L1 9z" fill="#0f6fb8" /><path d="M17 0l6 3v18l-6 3z" fill="#2aa0f0" /></>,
  pyblue: <><rect width="24" height="24" fill="#0078d7" /><path d="M5 3h8l4 4v12H5z" fill="#eee" /><g transform="translate(4 4) scale(.7)">{python}</g></>,
  rosette: <><g fill="none" strokeWidth="5"><path d="M4 15A8.500 8.500 0 0 1 9 3" stroke="#c52d2d" /><path d="M9 3q6-2 10 4" stroke="#6a8a2c" /><path d="M19 7q3 5 0 9" stroke="#b03030" /><path d="M4 15q3 6 9 5" stroke="#c9972c" /></g><path d="M12 23l2-8 2 5 4-5 1 8" stroke="#000" strokeWidth="2.200" fill="none" /></>,
  twelve: <><circle cx="12" cy="12" r="11.500" fill="#c49a2a" stroke="#8a6a18" /><circle cx="12" cy="12" r="9" fill="#2a8a30" stroke="#f3d860" strokeWidth="1.500" /><text x="12" y="17" fontFamily="Liberation Sans, sans-serif" fontWeight="700" fontSize="14" fill="#ffe840" stroke="#b00" strokeWidth=".4" textAnchor="middle" textLength="14">12</text></>,
  vbox: <><path d="M2 3l10-3 10 3-2 15-8 6-8-6z" fill="#1e3c62" /><path d="M12 2l7 2.500-7 4-7-4z" fill="#a9bdd2" /><path d="M4 7l7 4v10M20 7l-7 4v10" stroke="#dde6ef" strokeWidth="1.600" fill="none" /></>,
  mc: <path d="M0 23V3h6l6 11 6-11h6v20h-6V12l-5 10h-2L6 12v11z" fill="#46697c" stroke="#25404f" />,
  figma: <><rect width="24" height="24" rx="1" fill="#222" /><path d="M9.500 3H12v6H9.500a3 3 0 0 1 0-6z" fill="#f24e1e" /><path d="M12 3h2.500a3 3 0 0 1 0 6H12z" fill="#ff7262" /><path d="M9.500 9H12v6H9.500a3 3 0 0 1 0-6z" fill="#a259ff" /><circle cx="15" cy="12" r="3" fill="#1abcfe" /><path d="M9.500 15H12v3a3 3 0 1 1-2.500-3z" fill="#0acf83" /></>,
  multisim: <g transform="translate(-1.500 0) scale(1.500)">{ICONS.app}</g>,
};
const active = ['explorer', 'yandex', 'excel', 'word', 'multisim'];
const pinned = Object.keys(TASKS).slice(3);

const TRAY: React.ReactNode[] = [
  <g fill="none" stroke="#000"><path d="M5.500.500h5v4h-5zM4.500 4.500h7v8M4.500 4.500v11h5M7 2.500h2" /><path d="M9 13l2 2 3-4" /></g>,
  <><path d="M8 1l7 2v5q0 5-7 8-7-3-7-8V3z" fill="#fff" stroke="#000" /><path d="M8 1v14M1 8h13" stroke="#000" /><path d="M11 7l5 9H7z" fill="#fb2" /><path d="M11.500 10v3" stroke="#000" /></>,
  <><path d="M0 0h3l1 1h8l1-1h3v16h-3l-1-1H4l-1 1H0z" fill="#333" /><path d="M1 3.500h14M1 6.500h14M1 9.500h14M1 12.500h14" stroke="#aaa" strokeDasharray="2 1" /></>,
  <g fill="none" stroke="#000" strokeWidth="1.200"><rect x="2.500" y="5.500" width="8" height="6" rx="1" /><path d="M10.500 8l3-2v5l-3-2M3 2.500q4-3 8 0M3 14.500q4 2 8 0" /></g>,
  <><rect width="16" height="16" rx="3" fill="#c813f0" /><g transform="scale(.66)">{scissors}</g></>,
  <g fill="none" stroke="#000"><path d="M3.500 8.500h9l1 7h-11z" fill="#fff" /><path d="M5 12.500h1M7.500 12.500h1M10 12.500h1M3 5q0-5 5-5t5 5M5 6q0-3 3-3t3 3" /><circle cx="8" cy="6" r="1" /></g>,
  <><path d="M8 0l7 4v8l-7 4-7-4V4z" fill="#35d060" stroke="#155" /><path d="M6 4v8M10.500 5.500L7 9l3.500 3" stroke="#035" strokeWidth="1.800" fill="none" /></>,
  <><circle cx="8" cy="8" r="8" fill="#fa9d28" /><path d="M9 2L4 9h3l-1 5 6-7H9z" fill="#fff" /></>,
  <><path d="M1 1h14v10H1z" fill="#808080" stroke="#333" /><path d="M2 14.500h4M9 14.500h5" stroke="#333" strokeWidth="3" /></>,
];

const mainMenu: [string, number, number][] = [
  ['File', 0, 32], ['Edit', 0, 35], ['View', 0, 40], ['Place', 0, 43], ['MCU', 0, 42], ['Simulate', 0, 62],
  ['Transfer', 3, 61], ['Tools', 0, 45], ['Reports', 0, 59], ['Options', 0, 59], ['Window', 0, 60], ['Help', 0, 40],
];
const grapherMenu: [string, number][] = [
  ['File', 32], ['Edit', 35], ['View', 40], ['Graph', 49], ['Trace', 45], ['Cursor', 52], ['Legend', 56], ['Tools', 45], ['Help', 40],
];
const X = () => (
  <svg width="8" height="8" viewBox="0 0 8 8"><path d="M1 1l6 6M7 1L1 7" stroke="#000" strokeWidth="1.800" /></svg>
);

export default function App() {
  return (
    <Desktop>
      <Global />
      <TitleBar>
        <Icon name="app" />
        <TitleText>Design1 - Multisim - [Design1 *]</TitleText>
        <Caption viewBox="0 0 46 20"><path d="M27 9.500h10" stroke="#888" /></Caption>
        <Caption viewBox="0 0 46 20"><path d="M21.500 6.500h7v7h-7zM23.500 6V4.500h7v7H29" fill="none" stroke="#888" /></Caption>
        <Caption viewBox="0 0 46 20"><path d="M16 4l10 10M26 4L16 14" stroke="#888" /></Caption>
      </TitleBar>
      <MenuBar>
        <Icon name="design" />
        <Gap $w={8} />
        {mainMenu.map(([t, k, w]) => (
          <MenuItem key={t} $w={w}>
            {t.slice(0, k)}
            <u>{t[k]}</u>
            {t.slice(k + 1)}
          </MenuItem>
        ))}
        <MdiButtons>
          <SmallButton $s={14}><svg width="10" height="10"><path d="M2 8h6" stroke="#000" strokeWidth="2" /></svg></SmallButton>
          <SmallButton $s={14}><svg width="10" height="10"><path d="M1 4.500h6v4H1zM3 4V1.500h6v4H7" fill="none" stroke="#000" strokeWidth="1.300" /></svg></SmallButton>
          <SmallButton $s={14}><X /></SmallButton>
        </MdiButtons>
      </MenuBar>
      <BarRow>
        <Bar $w={280} $pad={10}>
          <Icons names={['new', 'open', 'openSample', 'save']} />
          <Sep />
          <Icons names={['print', 'preview']} />
          <Sep />
          <Icons names={['cut', 'copyGray', 'paste']} />
          <Sep />
          <Icons names={['undo', 'redoGray']} />
        </Bar>
        <Gap $w={97} />
        <Bar $w={528} $pad={10}>
          <Cell $on><Icon name="viewTool" /></Cell>
          <Cell $on><Icon name="viewGrid" /></Cell>
          <Icons names={['viewPart', 'viewSheet']} />
          <Cell $w={33} $on><Icon name="viewGraph" /><Arrow /></Cell>
          <Icons names={['calc', 'tree']} />
          <Sep />
          <Icons names={['newPart', 'database']} />
          <Gap $w={1} />
          <Select>
            --- In Use List ---
            <svg width="11" height="8"><path d="M1 1l4.500 4.500L10 1" fill="none" stroke="#555" strokeWidth="1.300" /></svg>
          </Select>
          <Sep $w={9} />
          <Icons names={['erc', 'annotBack', 'annotFwd']} />
          <Cell $w={10}><Arrow /></Cell>
          <Sep $w={9} />
          <Icons names={['find', 'web', 'help']} />
        </Bar>
        <Bar $w={86} $end $pad={12}>
          <svg width="68" height="18" shapeRendering="crispEdges">
            <rect x="1" y="2" width="29" height="14" fill="#fff" stroke="#000" strokeWidth="2" />
            <rect x="3.500" y="4.500" width="12" height="9" fill="#fff" stroke="#000" />
            <circle cx="9" cy="9" r="2" fill="none" stroke="#000" />
            <path d="M15 14V5l4-4h5v12z" fill="#eee" stroke="#000" />
            <path d="M24 4h4v10h-9z" fill="#888" />
            <path d="M20.500 5v5" stroke="#000" />
            <rect x="36" y="1" width="30" height="14" fill="#aaa" />
            <path d="M37 3h28v1H37zM39 6h25v8H39z" fill="#f0f0f0" />
            <path d="M49 6h2v7h-2zM53 6h2v7h-2z" fill="#999" />
          </svg>
        </Bar>
      </BarRow>
      <BarRow>
        <Bar $w={470} $pad={10}>
          <Icons names={['source', 'resistor', 'diode', 'transistor', 'opamp', 'ttl', 'cmos', 'misdigital', 'mixed', 'indicator', 'power', 'misc', 'periph', 'rf', 'motor', 'ni', 'socket']} />
          <Sep />
          <Icons names={['mcu']} />
          <Sep />
          <Icons names={['hier', 'bus']} />
        </Bar>
        <Bar $w={58} $pad={10}>
          <Icons names={['ladder1', 'ladder2']} />
        </Bar>
        <Bar $w={234} $pad={10}>
          <Icons names={['run', 'pause']} />
          <Cell $on><Icon name="stop" /></Cell>
          <Icons names={['record', 'step1', 'step2', 'step3', 'step4', 'handGray', 'handX']} />
        </Bar>
        <Bar $w={124} $end $pad={10}>
          <Icons names={['zoomIn', 'zoomOut', 'zoomArea', 'zoomFit', 'zoomSheet']} />
        </Bar>
      </BarRow>

      <Work>
        <Toolbox>
          <ToolboxHead>
            <ToolboxTitle>Design Toolbox</ToolboxTitle>
            <SmallButton $s={13}><svg width="7" height="5"><path d="M0 4l3.500-3L7 4z" fill="#999" /></svg></SmallButton>
            <SmallButton $s={13}><X /></SmallButton>
          </ToolboxHead>
          <ToolboxBar>
            <Icon name="newNote" />
            <Icon name="open" />
            <Icon name="save" />
            <Icon name="winArrow" />
            <Icon name="rename" />
          </ToolboxBar>
          <Tree>
            <TreeRow $indent={8}>
              <svg width="17" height="16" shapeRendering="crispEdges">
                <rect x=".5" y="3.500" width="8" height="8" fill="#fff" stroke="#888" />
                <path d="M2 7.500h5" stroke="#336" />
                <path d="M10 7.500h7" stroke="#888" strokeDasharray="1 1" />
              </svg>
              <Icon name="clip" />
              <TreeLabel>Design1</TreeLabel>
            </TreeRow>
            <TreeRow $indent={31}>
              <svg width="11" height="18" shapeRendering="crispEdges">
                <path d="M.5 0v9.500H11" fill="none" stroke="#888" strokeDasharray="1 1" />
              </svg>
              <Icon name="design" />
              <TreeLabel $sel>Design1</TreeLabel>
            </TreeRow>
          </Tree>
          <BottomTabs>
            <BottomTab $w={59} $on>Hierarchy</BottomTab>
            <BottomTab $w={47}>Visibility</BottomTab>
            <BottomTab $w={76}>Project View</BottomTab>
          </BottomTabs>
        </Toolbox>
        <CanvasColumn>
          <CanvasFrame>
            <CanvasInner>
              <Sheet />
              <Backdrop />
              <ScrollBar>
                <svg width="17" height="19"><path d="M5 11l3.500-3.500L12 11" fill="none" stroke="#555" strokeWidth="2" /></svg>
                <ScrollThumb />
                <svg width="17" height="17"><path d="M5 7l3.500 3.500L12 7" fill="none" stroke="#555" strokeWidth="2" /></svg>
              </ScrollBar>
            </CanvasInner>
          </CanvasFrame>
          <Dock>
            <SmallButton $s={15}><Icon name="windows" size={14} /></SmallButton>
          </Dock>
        </CanvasColumn>
        <Strip>
          {instrumentFaces.map((face, i) => (
            <Instrument key={i} viewBox="0 0 16 16" shapeRendering="crispEdges">
              <path d="M.5 15V.5H15" fill="none" stroke="#fff" />
              <path d="M1 15.500h14.500V1" fill="none" stroke="#aaa" />
              {face}
            </Instrument>
          ))}
          <StripLine />
          <SheetSvg width="18" height="40" viewBox="0 0 18 40">
            <path d="M1 9l5 1-1 1 2 2h8l2 3v3l-2 3H5l-3-3v-4l2-1-3-2z" fill="#f8f000" stroke="#cc0" />
            <text x="3.500" y="20" fontSize="7.500" fontFamily="Noto Sans, sans-serif" fontWeight="600" textLength="12">1.4v</text>
            <path d="M7 27l4 3.500-4 3.500z" />
          </SheetSvg>
          <StripLine />
          <SheetSvg width="18" height="20"><path d="M11 10l2.500 2.500L16 10M11 14l2.500 2.500L16 14" fill="none" stroke="#000" strokeWidth="1.500" /></SheetSvg>
        </Strip>
      </Work>

      <Spreadsheet>
        <SideRail>
          <RailButton $s={13}><X /></RailButton>
          <RailButton $s={13}><svg width="5" height="7"><path d="M1 0l3 3.500L1 7z" fill="#999" /></svg></RailButton>
          <RailLabel>Spreadsheet View</RailLabel>
        </SideRail>
        <SheetColumn>
          <Results>Multisim  -  06.11.2023</Results>
          <SheetTabs>
            <SheetTab $w={48} $on>Results</SheetTab>
            <SheetTab $w={40}>Nets</SheetTab>
            <SheetTab $w={72}>Components</SheetTab>
            <SheetTab $w={79}>Copper layers</SheetTab>
            <SheetTab $w={60}>Simulation</SheetTab>
          </SheetTabs>
        </SheetColumn>
      </Spreadsheet>

      <Grapher>
        <GTitle>
          Grapher View
          <svg width="200" height="20">
            <path d="M85 9.500h10" stroke="#ddd" />
            <path d="M130.500 3.500h9v9h-9z" fill="none" stroke="#888" />
            <path d="M176 3l10 10M186 3l-10 10" stroke="#888" />
          </svg>
        </GTitle>
        <GMenu>
          {grapherMenu.map(([t, w]) => (
            <MenuItem key={t} $w={w}>{t}</MenuItem>
          ))}
        </GMenu>
        <GTools>
          <ToolGroup names={['open', 'save']} />
          <Sep $w={6} />
          <ToolGroup names={['undoGray', 'cross', 'copy', 'paste']} />
          <Sep $w={6} />
          <ToolGroup names={['gridRed', 'legend', 'cursors', 'invert']} on={['legend', 'invert']} />
          <Sep $w={6} />
          <ToolGroup names={['trace', 'dots', 'traceDots']} on={['trace']} />
          <Sep $w={6} />
          <ToolGroup names={['zoomIn', 'zoomOut', 'zoomOneGray', 'zoomBox', 'zoomHor', 'zoomVer', 'hand']} on={['zoomBox']} />
          <Sep $w={6} />
          <ToolGroup names={['letterA', 'xy']} />
          <Sep $w={6} />
          <ToolGroup names={['overlay', 'addTrace']} />
          <Sep $w={6} />
          <ToolGroup names={['toExcel', 'toLab']} />
        </GTools>
        <GTabs>
          {[0, 1, 2, 3, 4, 5].map((i) => (
            <GTab key={i}>IV analyzer-XIV1</GTab>
          ))}
          <GTabActive>Temperature Sweep</GTabActive>
          <GArrow $left />
          <GArrow />
        </GTabs>
        <PlotFrame>
          <Plot />
        </PlotFrame>
        <GStatus>
          Trace: I(R1)
          <svg width="9" height="9" shapeRendering="crispEdges"><path d="M7 0h2v2H7zM4 3h2v2H4zM7 3h2v2H7zM1 6h2v2H1zM4 6h2v2H4zM7 6h2v2H7z" fill="#bbb" /></svg>
        </GStatus>
      </Grapher>

      <TrayPopup>
        {TRAY.map((t, i) => (
          <Svg16 key={i} width="16" height="16" viewBox="0 0 16 16">{t}</Svg16>
        ))}
      </TrayPopup>

      <Taskbar>
        {['start', 'search', 'view'].map((n) => (
          <Task key={n} $w={48}><TaskIcon viewBox="0 0 24 24">{TASKS[n]}</TaskIcon></Task>
        ))}
        <Gap $w={2} />
        {pinned.map((n) => (
          <Task key={n} $active={active.includes(n)}><TaskIcon viewBox="0 0 24 24">{TASKS[n]}</TaskIcon></Task>
        ))}
        <svg width="96" height="20" viewBox="1114 738 96 20" fill="none" stroke="#000">
          <path d="M1122 751l5-5 5 5" strokeWidth="1.300" />
          <path d="M1144.500 743.500h12v9h-12zM1157 746.500h1.500v3h-1.500" />
          <path d="M1146 745h5v6h-5z" fill="#000" />
          <path d="M1170 754q1-10 12-11M1173 754q1-7 9-8M1176 754q1-4 6-5M1179 754q0-2 3-2" />
          <path d="M1190.500 746h3l4-3.500v11l-4-3.500h-3zM1199.500 745q2 3 0 6M1201.500 743.500q3 4.500 0 9M1204 742q4 6 0 12" />
        </svg>
        <Lang>ENG</Lang>
        <Clock>19:38<br />06.11.2023</Clock>
        <Notice width="18" height="18"><path d="M1.500 1.500h15v12h-5v3l-3-3h-7z" fill="none" stroke="#000" /></Notice>
      </Taskbar>
    </Desktop>
  );
}
